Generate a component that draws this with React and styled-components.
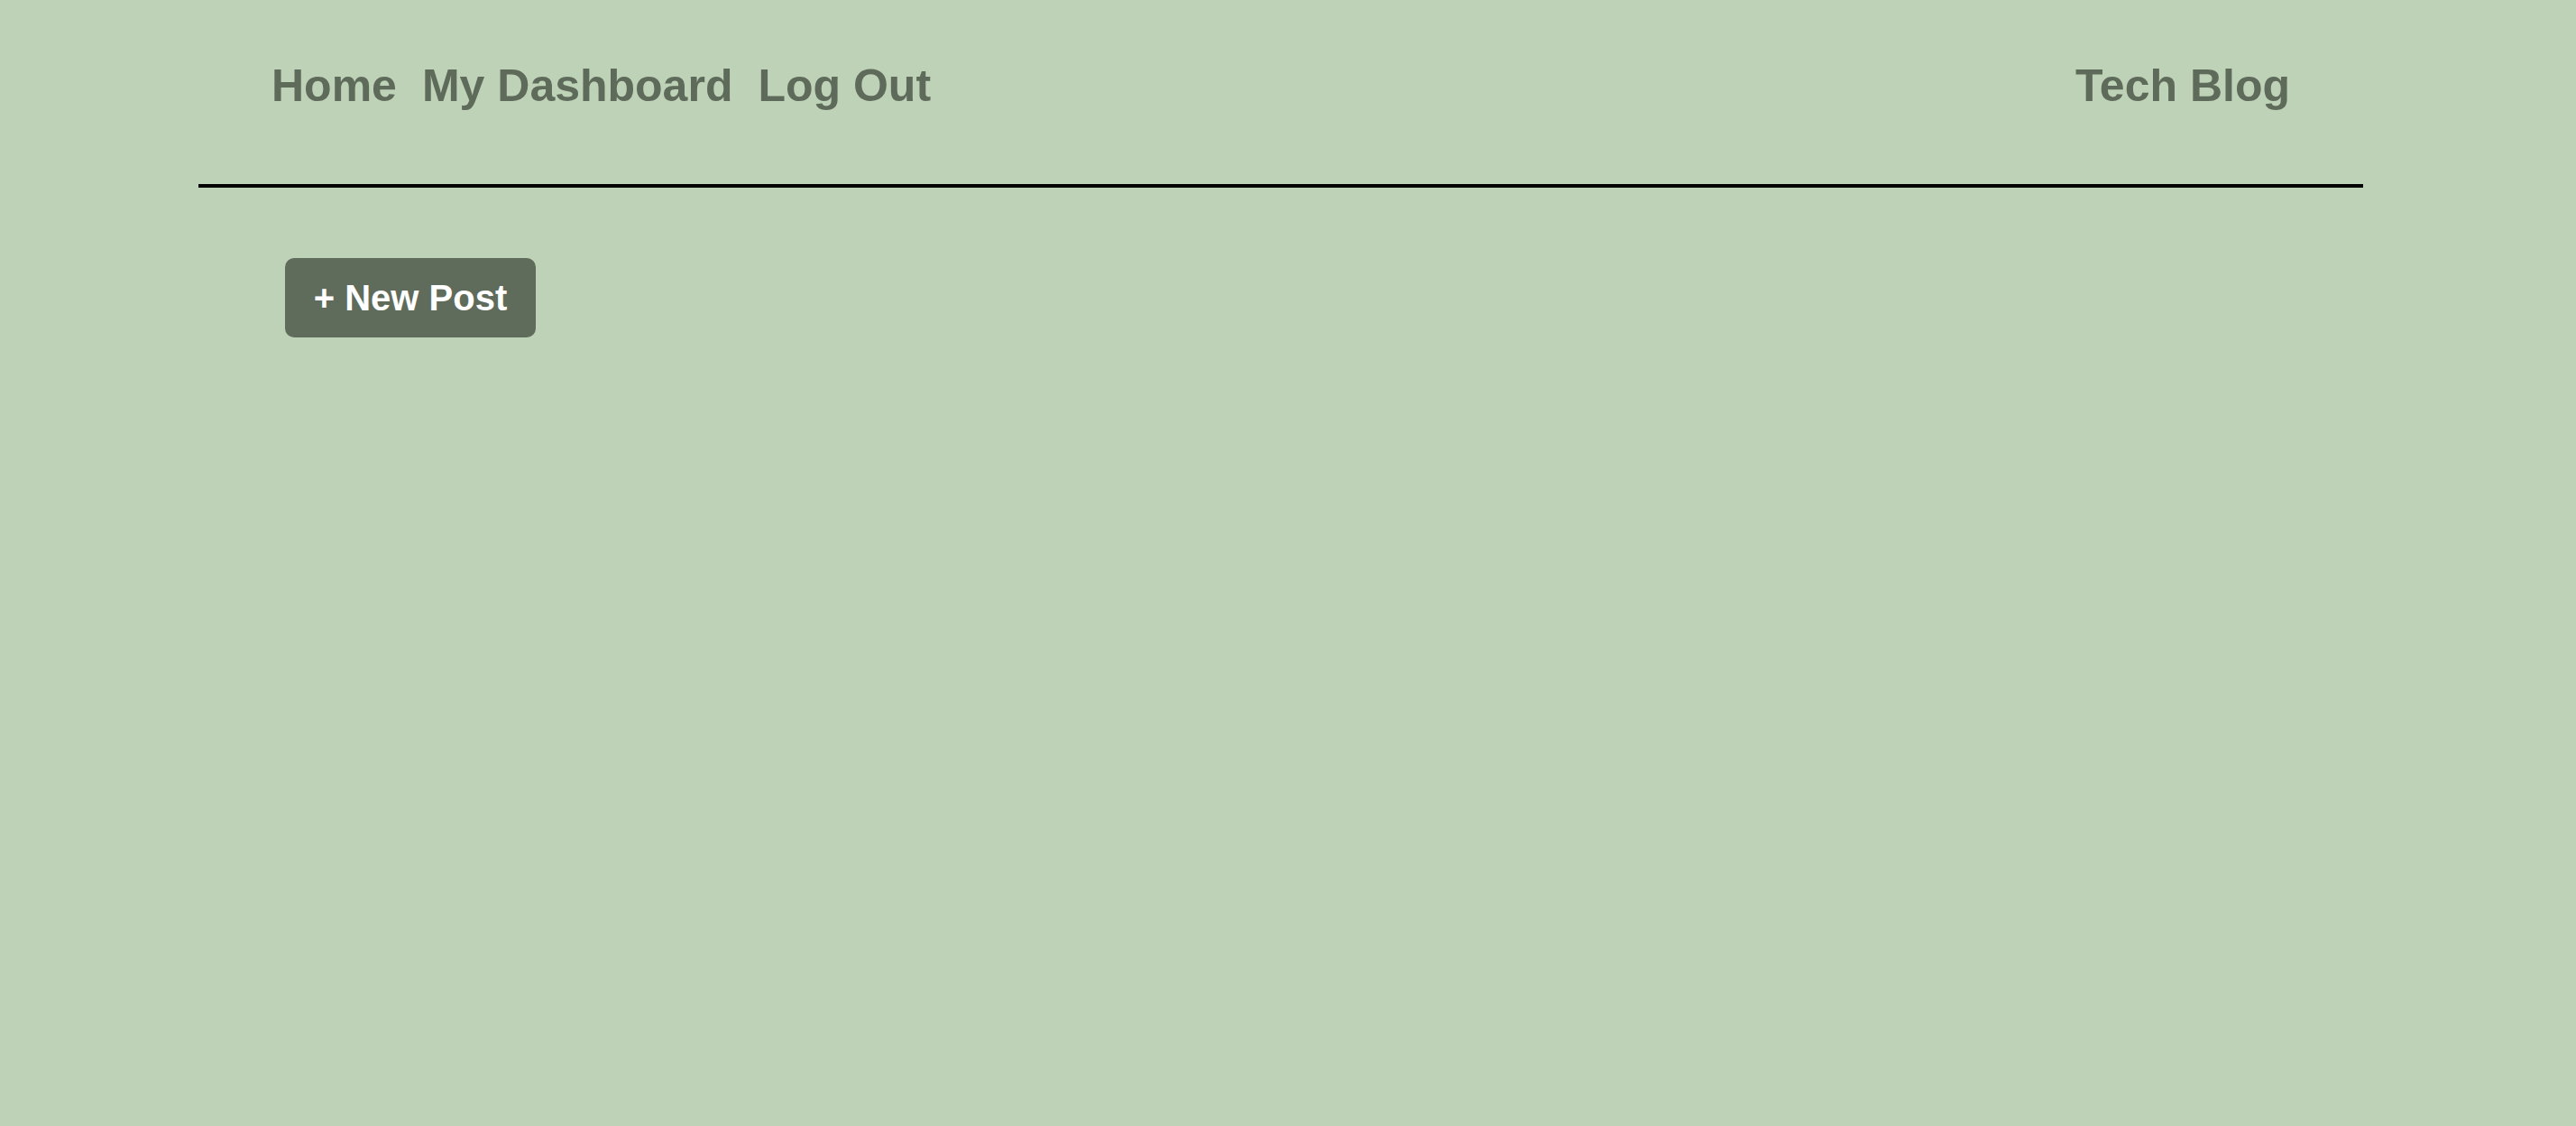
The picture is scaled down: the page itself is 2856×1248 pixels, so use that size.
import React from "react";
import styled, { createGlobalStyle } from "styled-components";

const Global = createGlobalStyle`
  html, body {
    margin: 0;
    padding: 0;
    background: #bed2b7;
    min-height: 100%;
  }
  body {
    font-family: "Liberation Sans", Arial, Helvetica, sans-serif;
    min-height: 1248px;
  }
`;

const Page = styled.div`
  padding: 66px 236px 0 220px;
  min-height: 1248px;
  box-sizing: border-box;
`;

const Header = styled.header`
  display: flex;
  justify-content: space-between;
  align-items: center;
  padding: 0 81px 0 81px;
`;

const Nav = styled.nav`
  display: flex;
  gap: 28px;
`;

const NavLink = styled.a`
  font-size: 50px;
  font-weight: 700;
  color: #5f6b5a;
  text-decoration: none;
  cursor: pointer;
`;

const Title = styled.h1`
  margin: 0;
  font-size: 50px;
  font-weight: 700;
  color: #5f6b5a;
`;

const Rule = styled.hr`
  margin: 80px 0 0 0;
  border: 0;
  height: 4px;
  background: #000;
`;

const Main = styled.main`
  padding: 78px 0 0 96px;
`;

const Button = styled.button`
  font-family: "Liberation Sans", Arial, Helvetica, sans-serif;
  font-size: 40px;
  font-weight: 700;
  color: #ffffff;
  background: #5f6b5b;
  border: 0;
  border-radius: 10px;
  width: 278px;
  height: 88px;
  padding: 0;
  cursor: pointer;
`;

export default function App() {
  return (
    <>
      <Global />
      <Page>
        <Header>
          <Nav>
            <NavLink>Home</NavLink>
            <NavLink>My Dashboard</NavLink>
            <NavLink>Log Out</NavLink>
          </Nav>
          <Title>Tech Blog</Title>
        </Header>
        <Rule />
        <Main>
          <Button>+ New Post</Button>
        </Main>
      </Page>
    </>
  );
}
